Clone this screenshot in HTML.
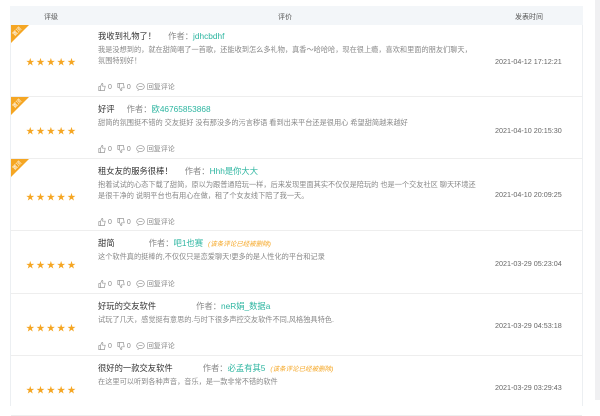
<!DOCTYPE html>
<html><head><meta charset="utf-8"><style>
*{margin:0;padding:0;box-sizing:border-box}
body{width:600px;height:400px;overflow:hidden;background:#fff;font-family:"Liberation Sans","Noto Sans CJK SC",sans-serif;position:relative}
.sb{position:absolute;left:595px;top:0;width:5px;height:400px;background:#f0f0f2}
.tbl{position:absolute;left:10px;top:6px;width:573px;height:400px;border-left:1px solid #eceff2;border-right:1px solid #eceff2}
.hd{position:absolute;left:10px;top:6px;width:573px;height:19px;background:#f3f6f9;font-size:7px;color:#555}
.hd span{position:absolute;top:6px}
.row{position:absolute;left:11px;width:571px;border-bottom:1px solid #eee}
.rib{position:absolute;left:0;top:0;width:18px;height:18px;overflow:hidden}
.rib:before{content:"";position:absolute;left:0;top:0;border-top:18px solid #f5a623;border-right:18px solid transparent}
.rib i{position:absolute;left:1px;top:3px;font-style:normal;font-size:5px;color:#fff;transform:rotate(-45deg)}
.stars{position:absolute;left:15px;color:#f5a623;font-size:8.5px;letter-spacing:1.8px}
.t{position:absolute;left:87px;font-size:8.3px;color:#333;white-space:nowrap}
.t b{font-weight:normal;color:#888;margin-left:12px}
.t em{font-style:normal;color:#2cb5a0}
.t s{text-decoration:none;font-style:italic;color:#f5a623;font-size:6.5px;margin-left:5px}
.c{position:absolute;left:87px;width:380px;font-size:7.2px;line-height:11px;color:#888}
.a{position:absolute;left:87px;font-size:7px;color:#888;white-space:nowrap;display:flex;align-items:center}
.a svg{margin-right:2px}
.a span{margin-right:5px}
.d{position:absolute;left:484px;font-size:7.2px;color:#666}
</style></head><body>
<div class="sb"></div>
<div class="tbl"></div>
<div class="hd"><span style="left:34px">评级</span><span style="left:268px">评价</span><span style="left:505px">发表时间</span></div>

<div class="row" style="top:25px;height:72px">
<div class="rib"><i>置顶</i></div>
<div class="stars" style="top:31px">★★★★★</div>
<div class="t" style="top:5px">我收到礼物了！<b>作者：</b><em>jdhcbdhf</em></div>
<div class="c" style="top:19px">我是没想到的，就在甜简唱了一首歌，还能收到怎么多礼物，真香～哈哈哈，现在很上瘾，喜欢和里面的朋友们聊天，氛围特别好！</div>
<div class="a" style="top:57px"><svg width="8" height="8" viewBox="0 0 10 10" fill="none" stroke="#999" stroke-width="0.9"><path d="M1 4.5h2v5H1zM3 4.5l2-4c1 0 1.3.8 1 2l-.3 1.5H9l-1 5.5H3"/></svg><span>0</span><svg width="8" height="8" viewBox="0 0 10 10" fill="none" stroke="#999" stroke-width="0.9"><path d="M1 .5h2v5H1zM3 5.5l2 4c1 0 1.3-.8 1-2l-.3-1.5H9L8 .5H3"/></svg><span>0</span><svg width="9" height="8" viewBox="0 0 11 10" fill="none" stroke="#999" stroke-width="0.9"><ellipse cx="5.5" cy="4.5" rx="4.8" ry="3.8"/><path d="M3 8.5l-1 1.3"/><path d="M3 4.5h5"/></svg><span>回复评论</span></div>
<div class="d" style="top:32px">2021-04-12 17:12:21</div>
</div>

<div class="row" style="top:97px;height:62px">
<div class="rib"><i>置顶</i></div>
<div class="stars" style="top:28px">★★★★★</div>
<div class="t" style="top:6px">好评<b>作者：</b><em>欧46765853868</em></div>
<div class="c" style="top:20px">甜简的氛围挺不错的 交友挺好 没有那没多的污言秽语 看到出来平台还是很用心 希望甜简越来越好</div>
<div class="a" style="top:47px"><svg width="8" height="8" viewBox="0 0 10 10" fill="none" stroke="#999" stroke-width="0.9"><path d="M1 4.5h2v5H1zM3 4.5l2-4c1 0 1.3.8 1 2l-.3 1.5H9l-1 5.5H3"/></svg><span>0</span><svg width="8" height="8" viewBox="0 0 10 10" fill="none" stroke="#999" stroke-width="0.9"><path d="M1 .5h2v5H1zM3 5.5l2 4c1 0 1.3-.8 1-2l-.3-1.5H9L8 .5H3"/></svg><span>0</span><svg width="9" height="8" viewBox="0 0 11 10" fill="none" stroke="#999" stroke-width="0.9"><ellipse cx="5.5" cy="4.5" rx="4.8" ry="3.8"/><path d="M3 8.5l-1 1.3"/><path d="M3 4.5h5"/></svg><span>回复评论</span></div>
<div class="d" style="top:29px">2021-04-10 20:15:30</div>
</div>

<div class="row" style="top:159px;height:72px">
<div class="rib"><i>置顶</i></div>
<div class="stars" style="top:32px">★★★★★</div>
<div class="t" style="top:6px">租女友的服务很棒！<b>作者：</b><em>Hhh是你大大</em></div>
<div class="c" style="top:20px">抱着试试的心态下载了甜简，原以为跟普通陪玩一样，后来发现里面其实不仅仅是陪玩的 也是一个交友社区 聊天环境还是很干净的 说明平台也有用心在做，租了个女友线下陪了我一天。</div>
<div class="a" style="top:58px"><svg width="8" height="8" viewBox="0 0 10 10" fill="none" stroke="#999" stroke-width="0.9"><path d="M1 4.5h2v5H1zM3 4.5l2-4c1 0 1.3.8 1 2l-.3 1.5H9l-1 5.5H3"/></svg><span>0</span><svg width="8" height="8" viewBox="0 0 10 10" fill="none" stroke="#999" stroke-width="0.9"><path d="M1 .5h2v5H1zM3 5.5l2 4c1 0 1.3-.8 1-2l-.3-1.5H9L8 .5H3"/></svg><span>0</span><svg width="9" height="8" viewBox="0 0 11 10" fill="none" stroke="#999" stroke-width="0.9"><ellipse cx="5.5" cy="4.5" rx="4.8" ry="3.8"/><path d="M3 8.5l-1 1.3"/><path d="M3 4.5h5"/></svg><span>回复评论</span></div>
<div class="d" style="top:31px">2021-04-10 20:09:25</div>
</div>

<div class="row" style="top:231px;height:63px">
<div class="stars" style="top:28px">★★★★★</div>
<div class="t" style="top:6px">甜简<b style="margin-left:34px">作者：</b><em>吧1也赛</em><s>(该条评论已经被删除)</s></div>
<div class="c" style="top:20px">这个软件真的挺棒的,不仅仅只是恋爱聊天!更多的是人性化的平台和记录</div>
<div class="a" style="top:48px"><svg width="8" height="8" viewBox="0 0 10 10" fill="none" stroke="#999" stroke-width="0.9"><path d="M1 4.5h2v5H1zM3 4.5l2-4c1 0 1.3.8 1 2l-.3 1.5H9l-1 5.5H3"/></svg><span>0</span><svg width="8" height="8" viewBox="0 0 10 10" fill="none" stroke="#999" stroke-width="0.9"><path d="M1 .5h2v5H1zM3 5.5l2 4c1 0 1.3-.8 1-2l-.3-1.5H9L8 .5H3"/></svg><span>0</span><svg width="9" height="8" viewBox="0 0 11 10" fill="none" stroke="#999" stroke-width="0.9"><ellipse cx="5.5" cy="4.5" rx="4.8" ry="3.8"/><path d="M3 8.5l-1 1.3"/><path d="M3 4.5h5"/></svg><span>回复评论</span></div>
<div class="d" style="top:28px">2021-03-29 05:23:04</div>
</div>

<div class="row" style="top:294px;height:62px">
<div class="stars" style="top:28px">★★★★★</div>
<div class="t" style="top:6px">好玩的交友软件<b style="margin-left:40px">作者：</b><em>neR娟_数据a</em></div>
<div class="c" style="top:20px">试玩了几天，感觉挺有意思的.与时下很多声控交友软件不同,风格独具特色.</div>
<div class="a" style="top:47px"><svg width="8" height="8" viewBox="0 0 10 10" fill="none" stroke="#999" stroke-width="0.9"><path d="M1 4.5h2v5H1zM3 4.5l2-4c1 0 1.3.8 1 2l-.3 1.5H9l-1 5.5H3"/></svg><span>0</span><svg width="8" height="8" viewBox="0 0 10 10" fill="none" stroke="#999" stroke-width="0.9"><path d="M1 .5h2v5H1zM3 5.5l2 4c1 0 1.3-.8 1-2l-.3-1.5H9L8 .5H3"/></svg><span>0</span><svg width="9" height="8" viewBox="0 0 11 10" fill="none" stroke="#999" stroke-width="0.9"><ellipse cx="5.5" cy="4.5" rx="4.8" ry="3.8"/><path d="M3 8.5l-1 1.3"/><path d="M3 4.5h5"/></svg><span>回复评论</span></div>
<div class="d" style="top:27px">2021-03-29 04:53:18</div>
</div>

<div class="row" style="top:356px;height:60px">
<div class="stars" style="top:28px">★★★★★</div>
<div class="t" style="top:6px">很好的一款交友软件<b style="margin-left:30px">作者：</b><em>必孟有其5</em><s>(该条评论已经被删除)</s></div>
<div class="c" style="top:20px">在这里可以听到各种声音，音乐，是一款非常不错的软件</div>
<div class="d" style="top:27px">2021-03-29 03:29:43</div>
</div>
</body></html>
